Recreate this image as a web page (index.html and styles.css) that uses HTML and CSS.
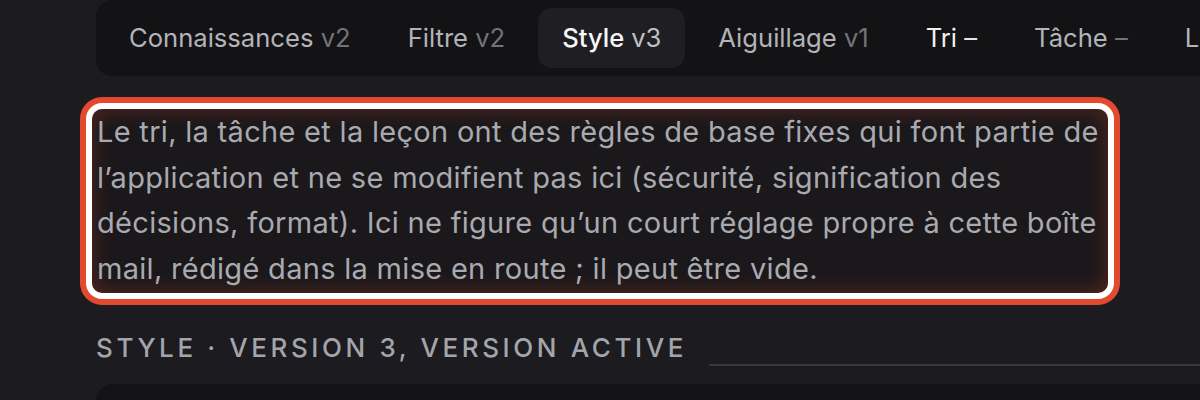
FILE: index.html
```html
<!DOCTYPE html>
<html lang="fr">
<head>
<meta charset="utf-8">
<title>Style</title>
<link rel="stylesheet" href="styles.css">
</head>
<body>
<div class="page">
  <nav class="tabs">
    <div class="tab"><span class="name">Connaissances</span> <span class="ver">v2</span></div>
    <div class="tab"><span class="name">Filtre</span> <span class="ver">v2</span></div>
    <div class="tab active"><span class="name">Style</span> <span class="ver">v3</span></div>
    <div class="tab"><span class="name">Aiguillage</span> <span class="ver">v1</span></div>
    <div class="tab hover"><span class="name">Tri</span> <span class="ver">–</span></div>
    <div class="tab"><span class="name">Tâche</span> <span class="ver">–</span></div>
    <div class="tab"><span class="name">Leçon</span> <span class="ver">–</span></div>
  </nav>
  <div class="note">Le tri, la tâche et la leçon ont des règles de base fixes qui font partie de l’application et ne se modifient pas ici (sécurité, signification des décisions, format). Ici ne figure qu’un court réglage propre à cette boîte mail, rédigé dans la mise en route ; il peut être vide.</div>
  <div class="section-head">
    <h2 class="section-title">Style · version 3, version active</h2>
    <div class="rule"></div>
  </div>
  <div class="card"></div>
</div>
</body>
</html>
```
FILE: styles.css
```css
html, body {
  margin: 0;
  padding: 0;
}
body {
  background: #1c1b20;
  width: 1200px;
  height: 400px;
  overflow: hidden;
  font-family: Inter, "Noto Sans", "Liberation Sans", sans-serif;
}
.page {
  width: 1400px;
  padding-left: 96px;
  box-sizing: border-box;
}
.tabs {
  display: flex;
  gap: 9px;
  width: max-content;
  padding: 8px 9px;
  background: #131316;
  border-radius: 16px;
}
.tab {
  height: 60px;
  line-height: 60px;
  padding: 0 24px;
  font-size: 25.6px;
  white-space: nowrap;
  border-radius: 14px;
  color: #b3b4b9;
}
.tab .ver {
  color: #727378;
}
.tab.active {
  background: #1f1f23;
  color: #f7f7f8;
  font-weight: 500;
}
.tab.active .ver {
  color: #bfc0c4;
  font-weight: 400;
}
.tab.hover {
  color: #f0f0f2;
}
.tab.hover .ver {
  color: #e6e6e8;
}
.note {
  margin-top: 33px;
  margin-left: -4px;
  width: 1016px;
  height: 184px;
  box-sizing: border-box;
  padding: 0 5px;
  font-size: 29px;
  letter-spacing: 0.3px;
  line-height: 45.5px;
  color: #a9aab0;
  background: #1a181b;
  border-radius: 10px;
  box-shadow: inset 0 0 22px rgba(224, 73, 47, 0.32), 0 0 0 6px #ffffff, 0 0 0 12px #e2492f;
}
.section-head {
  display: flex;
  align-items: flex-end;
  gap: 22px;
  margin-top: 38px;
}
.section-title {
  margin: 0;
  font-size: 26px;
  line-height: 34px;
  font-weight: 500;
  letter-spacing: 3.6px;
  text-transform: uppercase;
  color: #a3a5ab;
  white-space: nowrap;
}
.rule {
  flex: 1;
  height: 2px;
  margin-bottom: -1px;
  background: #38383e;
}
.card {
  margin-top: 19px;
  height: 120px;
  background: #141416;
  border-radius: 16px;
}
```
